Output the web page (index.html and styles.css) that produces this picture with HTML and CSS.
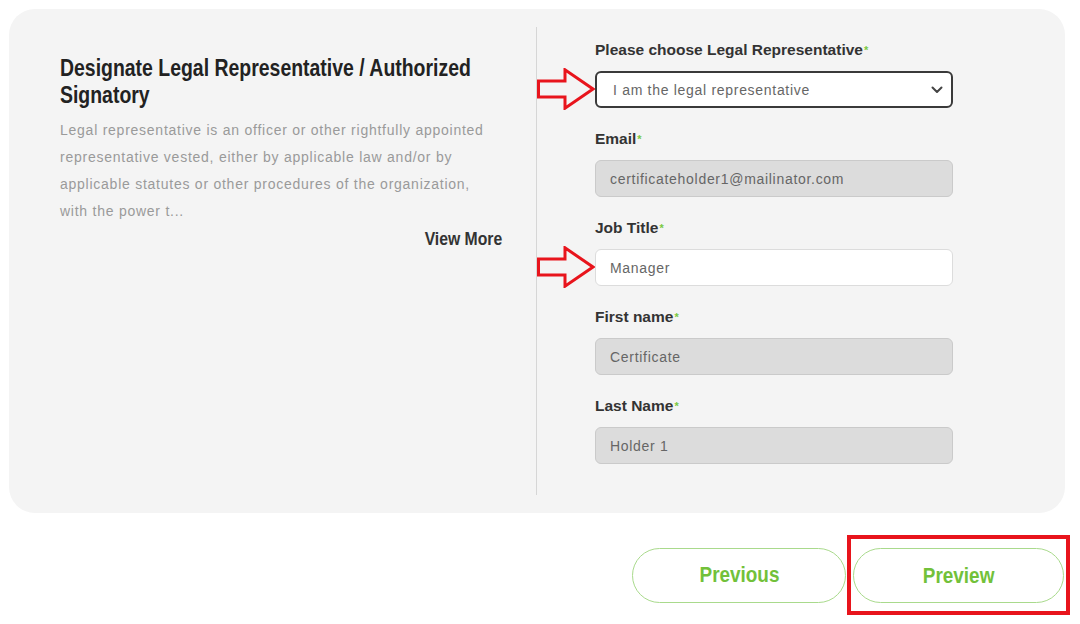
FILE: index.html
```html
<!DOCTYPE html>
<html lang="en">
<head>
    <meta charset="UTF-8">
    <meta name="viewport" content="width=device-width, initial-scale=1.0">
    <title>Designate Legal Representative</title>
    <link rel="stylesheet" href="styles.css">
</head>
<body>
    <div class="card">
        <div class="intro">
            <h2 class="intro_title">Designate Legal Representative / Authorized Signatory</h2>
            <p class="intro_text">Legal representative is an officer or other rightfully appointed representative vested, either by applicable law and/or by applicable statutes or other procedures of the organization, with the power t...</p>
            <div class="view_more"><span class="narrow">View More</span></div>
        </div>

        <form class="form" name="rep">
            <div class="field">
                <label class="field_label">Please choose Legal Representative<span class="req">*</span></label>
                <div class="select_box">
                    <span>I am the legal representative</span>
                    <svg class="chevron" width="12" height="8" viewBox="0 0 12 8"><path d="M1.5 1.5 L6 6 L10.5 1.5" fill="none" stroke="#444" stroke-width="2" stroke-linecap="round" stroke-linejoin="round"/></svg>
                </div>
                <svg class="mark_arrow" width="58" height="42" viewBox="0 0 58 42"><polygon points="1.5,13 28,13 28,1.8 56,21 28,40.2 28,29 1.5,29" fill="none" stroke="#e8141c" stroke-width="3" stroke-linejoin="miter"/></svg>
            </div>
            <div class="field">
                <label class="field_label">Email<span class="req">*</span></label>
                <div class="input input_disabled">certificateholder1@mailinator.com</div>
            </div>
            <div class="field">
                <label class="field_label">Job Title<span class="req">*</span></label>
                <div class="input">Manager</div>
                <svg class="mark_arrow" width="58" height="42" viewBox="0 0 58 42"><polygon points="1.5,13 28,13 28,1.8 56,21 28,40.2 28,29 1.5,29" fill="none" stroke="#e8141c" stroke-width="3" stroke-linejoin="miter"/></svg>
            </div>
            <div class="field">
                <label class="field_label">First name<span class="req">*</span></label>
                <div class="input input_disabled">Certificate</div>
            </div>
            <div class="field">
                <label class="field_label">Last Name<span class="req">*</span></label>
                <div class="input input_disabled">Holder 1</div>
            </div>
        </form>
    </div>

    <div class="actions">
        <button class="pill_btn prev_btn" type="button"><span class="narrow">Previous</span></button>
        <div class="highlight">
            <button class="pill_btn" type="button"><span class="narrow">Preview</span></button>
        </div>
    </div>
</body>
</html>
```

FILE: styles.css
```css
body{
    margin: 0;
    background: #fff;
    font-family: "Liberation Sans", Arial, sans-serif;
    color: #333;
}
/* arial narrow look: plain arial squeezed sideways */
.narrow{
    display: inline-block;
    transform: scaleX(0.86);
}
.card{
    margin: 9px 15px 0 9px;
    height: 504px;
    box-sizing: border-box;
    padding: 18px 0;
    background: #f4f4f4;
    border-radius: 26px;
    display: flex;
}
.intro{
    width: 528px;
    box-sizing: border-box;
    padding: 27px 34px 0 51px;
    border-right: 1px solid #d6d6d6;
}
.intro_title{
    width: 540px;
    margin: 0;
    font-size: 24px;
    line-height: 27px;
    font-weight: bold;
    color: #222;
    transform: scaleX(0.81);
    transform-origin: left top;
}
.intro_text{
    margin: 9px 0 0;
    font-size: 14px;
    line-height: 27px;
    letter-spacing: 0.75px;
    color: #9a9a9a;
}
.view_more{
    margin-top: 4px;
    text-align: right;
    font-size: 17.5px;
    font-weight: bold;
    color: #333;
}
.view_more .narrow{
    transform: scaleX(0.9);
    transform-origin: right center;
}
.form{
    padding: 14px 0 0 58px;
    width: 358px;
}
.field{
    position: relative;
    margin-bottom: 22px;
}
.field_label{
    display: block;
    height: 18px;
    line-height: 18px;
    margin-bottom: 12px;
    font-size: 15.5px;
    font-weight: bold;
    color: #333;
}
.req{
    color: #7ac943;
    font-size: 11px;
    vertical-align: top;
    margin-left: 1px;
}
.select_box, .input{
    height: 37px;
    box-sizing: border-box;
    display: flex;
    align-items: center;
    border-radius: 6px;
    font-size: 14px;
    letter-spacing: 0.7px;
    color: #666;
}
.select_box{
    justify-content: space-between;
    padding: 0 8px 0 16px;
    background: #fff;
    border: 2px solid #3a3a3a;
}
.input{
    padding: 0 14px;
    background: #fff;
    border: 1px solid #dcdcdc;
}
.input_disabled{
    background: #dcdcdc;
    border-color: #cacaca;
}
.mark_arrow{
    position: absolute;
    left: -58px;
    bottom: -2px;
}
.actions{
    display: flex;
    justify-content: flex-end;
    align-items: center;
    gap: 1px;
    margin: 22px 10px 0 0;
}
.highlight{
    border: 4px solid #e8141c;
    padding: 9px 2px 8px;
}
.pill_btn{
    width: 211px;
    height: 55px;
    background: #fff;
    border: 1.5px solid #a9da8c;
    border-radius: 28px;
    font-family: "Liberation Sans", Arial, sans-serif;
    font-size: 22px;
    font-weight: bold;
    color: #72c13a;
}
.prev_btn{
    width: 214px;
}
```
